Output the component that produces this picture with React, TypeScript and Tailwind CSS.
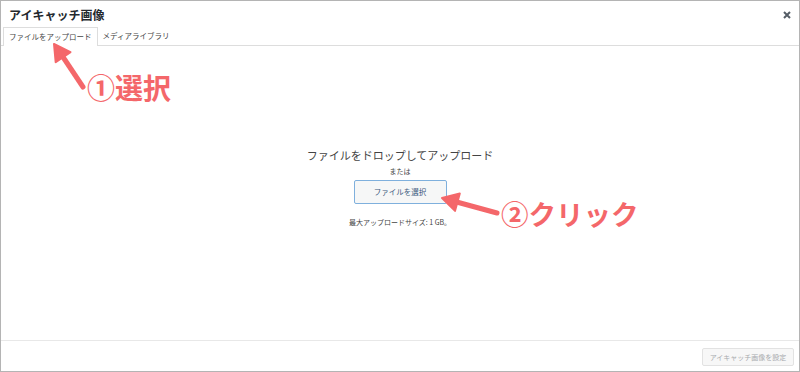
import React from "react";

const jp = { fontFamily: '"Noto Sans CJK JP", "Noto Sans", sans-serif' };

export default function App() {
  return (
    <div
      className="relative w-[800px] h-[372px] border border-[#b4b4b4] bg-white flex flex-col overflow-hidden"
      style={jp}
    >
      {/* Title row */}
      <div className="h-[26px] flex items-center justify-between pl-[8px] pr-[8px]">
        <div className="text-[12px] leading-[14px] font-bold text-[#23282d] mt-[1px]">アイキャッチ画像</div>
        <svg width="8" height="8" viewBox="0 0 8 8" className="mt-[1px]">
          <path d="M1 1 L7 7 M7 1 L1 7" stroke="#555d66" strokeWidth="2" strokeLinecap="butt" />
        </svg>
      </div>

      {/* Tabs */}
      <div className="h-[19px] flex items-end border-b border-[#dddddd] pl-[2px]">
        <div className="h-[19px] -mb-[1px] bg-white border-l border-t border-r border-[#dddddd] px-[5px] flex items-center text-[7.5px] text-[#444]">
          ファイルをアップロード
        </div>
        <div className="h-[18px] px-[5px] flex items-center text-[7.5px] text-[#444]">
          メディアライブラリ
        </div>
      </div>

      {/* Content */}
      <div className="flex-1 flex flex-col items-center pt-[102px]">
        <div className="text-[11px] leading-[14px] text-[#444]">ファイルをドロップしてアップロード</div>
        <div className="mt-[4px] text-[7px] leading-[10px] text-[#444]">または</div>
        <div className="mt-[4px] w-[93px] h-[24px] border border-[#7fb0dd] bg-[#f6f7f7] rounded-[2px] flex items-center justify-center text-[7.5px] text-[#3c5a7e]">
          ファイルを選択
        </div>
        <div className="mt-[13px] text-[7px] leading-[10px] text-[#444]">最大アップロードサイズ: 1 GB。</div>
      </div>

      {/* Footer */}
      <div className="h-[31px] border-t border-[#e8e8e8] flex items-start justify-end pr-[5px] pt-[7px]">
        <div className="w-[92px] h-[18px] border border-[#e2e2e2] bg-[#f7f7f7] rounded-[2px] flex items-center justify-center text-[7px] text-[#a7aaad]">
          アイキャッチ画像を設定
        </div>
      </div>

      {/* Annotations */}
      <svg
        className="absolute left-0 top-0 pointer-events-none"
        width="800"
        height="372"
        viewBox="0 0 800 372"
      >
        <line x1="82" y1="86" x2="60" y2="53" stroke="#f4676a" strokeWidth="5" strokeLinecap="round" />
        <polygon points="53,43 69.5,51.1 54.7,61.3" fill="#f4676a" stroke="#f4676a" strokeWidth="2" strokeLinejoin="round" />
        <line x1="496" y1="212" x2="452" y2="200" stroke="#f4676a" strokeWidth="5" strokeLinecap="round" />
        <polygon points="441,197 458.8,192.5 454,209.9" fill="#f4676a" stroke="#f4676a" strokeWidth="2" strokeLinejoin="round" />
      </svg>
      <div className="absolute left-[86px] top-[71px] text-[28px] leading-[30px] font-bold text-[#f4676a]">①選択</div>
      <div className="absolute left-[500px] top-[197px] text-[27.5px] leading-[30px] font-bold text-[#f4676a]">②クリック</div>
    </div>
  );
}
